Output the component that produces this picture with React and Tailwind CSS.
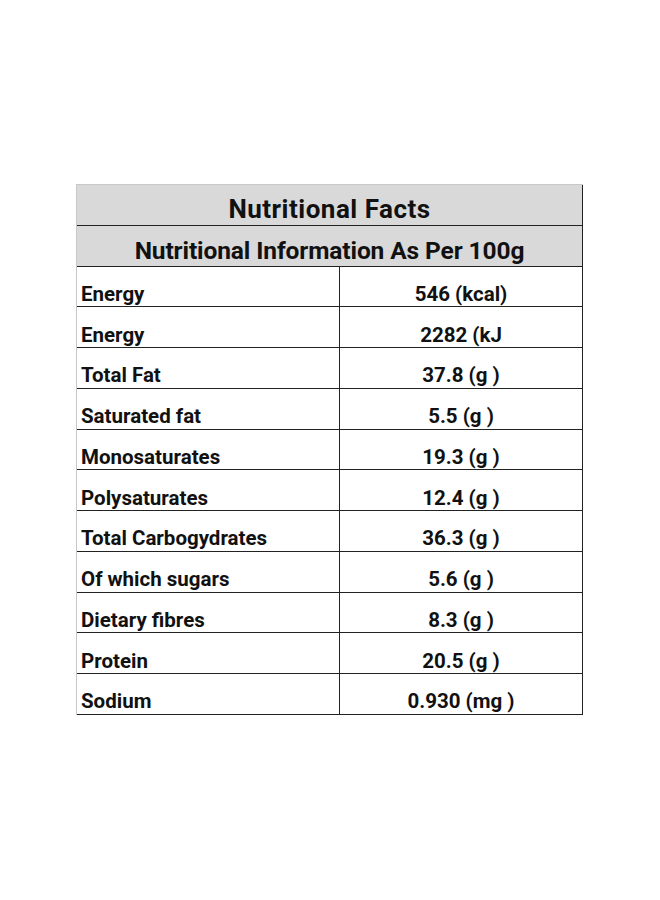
import React from 'react';

const rows = [
	['Energy', '546 (kcal)'],
	['Energy', '2282 (kJ'],
	['Total Fat', '37.8 (g )'],
	['Saturated fat', '5.5 (g )'],
	['Monosaturates', '19.3 (g )'],
	['Polysaturates', '12.4 (g )'],
	['Total Carbogydrates', '36.3 (g )'],
	['Of which sugars', '5.6 (g )'],
	['Dietary fibres', '8.3 (g )'],
	['Protein', '20.5 (g )'],
	['Sodium', '0.930 (mg )'],
]

const App = () => {
	return <div className="w-[660px] h-[900px] bg-white pt-[184px] pl-[76px]" style={{ fontFamily: 'Roboto, "Liberation Sans", sans-serif' }}>
		<div className="w-[507px] border-t border-l border-[#c8c8c8] text-[#111]">
			<div className="h-[40.75px] bg-[#d9d9d9] border-b border-r border-[#222] flex items-end justify-center pb-[0px] text-[26px] tracking-[0.5px] font-bold leading-[32px]">
				Nutritional Facts
			</div>
			<div className="h-[40.75px] bg-[#d9d9d9] border-b border-r border-[#222] flex items-end justify-center pb-[0px] text-[24.5px] tracking-[-0.1px] font-bold leading-[30px]">
				Nutritional Information As Per 100g
			</div>
			{rows.map(([label, value], i) => (
				<div key={i} className="h-[40.75px] flex border-b border-r border-[#222] text-[20.5px] font-bold leading-[24px]">
					<div className="w-[263px] border-r border-[#222] flex items-end pl-[4px] pb-[0.5px]">{label}</div>
					<div className="flex-1 flex items-end justify-center pb-[0.5px]">{value}</div>
				</div>
			))}
		</div>
	</div>
}

export default App
